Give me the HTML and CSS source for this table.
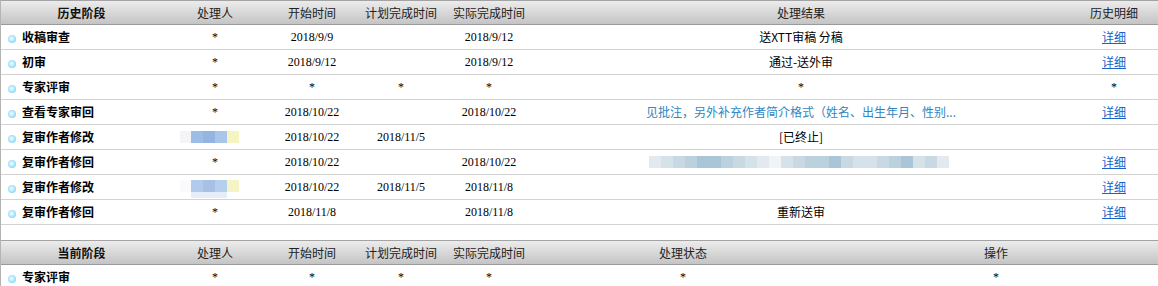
FILE: index.html
```html
<!DOCTYPE html>
<html lang="zh-CN">
<head>
<meta charset="utf-8">
<title>稿件处理历史</title>
<link rel="stylesheet" href="styles.css">
</head>
<body>
<div class="wrap">
  <table class="grid">
    <colgroup><col class="w1"><col class="w2"><col class="w3"><col class="w4"><col class="w5"><col class="w6"><col class="w7"></colgroup>
    <thead>
      <tr><th class="stage">历史阶段</th><th>处理人</th><th>开始时间</th><th>计划完成时间</th><th>实际完成时间</th><th>处理结果</th><th>历史明细</th></tr>
    </thead>
    <tbody>
      <tr><td class="name"><span class="dot"></span>收稿审查</td><td class="num">*</td><td class="num">2018/9/9</td><td></td><td class="num">2018/9/12</td><td>送XTT审稿 分稿</td><td><a href="#">详细</a></td></tr>
      <tr><td class="name"><span class="dot"></span>初审</td><td class="num">*</td><td class="num">2018/9/12</td><td></td><td class="num">2018/9/12</td><td>通过-送外审</td><td><a href="#">详细</a></td></tr>
      <tr><td class="name"><span class="dot"></span>专家评审</td><td class="num">*</td><td class="num">*</td><td class="num">*</td><td class="num">*</td><td class="num">*</td><td class="num">*</td></tr>
      <tr><td class="name"><span class="dot"></span>查看专家审回</td><td class="num">*</td><td class="num">2018/10/22</td><td></td><td class="num">2018/10/22</td><td class="note">见批注，另外补充作者简介格式（姓名、出生年月、性别...</td><td><a href="#">详细</a></td></tr>
      <tr><td class="name"><span class="dot"></span>复审作者修改</td><td class="bl"><div class="blur"><i class="c k0"></i><i class="c b1"></i><i class="c b2"></i><i class="c b3"></i><i class="c y1"></i></div></td><td class="num">2018/10/22</td><td class="num">2018/11/5</td><td></td><td>[已终止]</td><td></td></tr>
      <tr><td class="name"><span class="dot"></span>复审作者修回</td><td class="num">*</td><td class="num">2018/10/22</td><td></td><td class="num">2018/10/22</td><td class="bl"><div class="blur3"><i class="c s1"></i><i class="c s2"></i><i class="c s3"></i><i class="c s4"></i><i class="c s5"></i><i class="c s5"></i><i class="c s4"></i><i class="c s3"></i><i class="c s2"></i><i class="c s1"></i><i class="c s6"></i><i class="c s2"></i><i class="c s3"></i><i class="c s4"></i><i class="c s4"></i><i class="c s5"></i><i class="c s3"></i><i class="c s2"></i><i class="c s2"></i><i class="c s3"></i><i class="c s4"></i><i class="c s5"></i><i class="c s2"></i><i class="c s3"></i><i class="c s1"></i></div></td><td><a href="#">详细</a></td></tr>
      <tr><td class="name"><span class="dot"></span>复审作者修改</td><td class="bl"><div class="blur2"><i class="c k1"></i><i class="c b4"></i><i class="c b5"></i><i class="c b6"></i><i class="c y2"></i><i class="wb"></i><i class="gb"></i><i class="low"></i></div></td><td class="num">2018/10/22</td><td class="num">2018/11/5</td><td class="num">2018/11/8</td><td></td><td><a href="#">详细</a></td></tr>
      <tr><td class="name"><span class="dot"></span>复审作者修回</td><td class="num">*</td><td class="num">2018/11/8</td><td></td><td class="num">2018/11/8</td><td>重新送审</td><td><a href="#">详细</a></td></tr>
    </tbody>
  </table>
  <div class="gap"></div>
  <table class="grid">
    <colgroup><col class="w1"><col class="w2"><col class="w3"><col class="w4"><col class="w5"><col class="v6"><col class="v7"></colgroup>
    <thead>
      <tr><th class="stage">当前阶段</th><th>处理人</th><th>开始时间</th><th>计划完成时间</th><th>实际完成时间</th><th>处理状态</th><th>操作</th></tr>
    </thead>
    <tbody>
      <tr><td class="name"><span class="dot"></span>专家评审</td><td class="num">*</td><td class="num">*</td><td class="num">*</td><td class="num">*</td><td class="num">*</td><td class="num">*</td></tr>
    </tbody>
  </table>
</div>
</body>
</html>
```
FILE: styles.css
```css
html, body {
  margin: 0;
  padding: 0;
  background: #fff;
}
body {
  font-family: "Noto Sans CJK SC", "Microsoft YaHei", sans-serif;
  font-size: 12px;
  color: #000;
}
.wrap {
  width: 1158px;
  border-left: 1px solid #b4b4b4;
  box-sizing: border-box;
}
.grid {
  width: 1157px;
  table-layout: fixed;
  border-collapse: separate;
  border-spacing: 0;
}
.w1 { width: 161px; }
.w2 { width: 106px; }
.w3 { width: 88px; }
.w4 { width: 90px; }
.w5 { width: 86px; }
.w6 { width: 538px; }
.w7 { width: 88px; }
.v6 { width: 302px; }
.v7 { width: 324px; }

.grid th {
  height: 23px;
  padding: 0;
  border-top: 1px solid #a3a3a3;
  border-bottom: 1px solid #9a9a9a;
  background: linear-gradient(#ececec, #c4c4c4);
  font-weight: normal;
  color: #222;
  text-align: center;
  line-height: 23px;
  white-space: nowrap;
}
.grid th.stage {
  font-weight: bold;
  color: #111;
}
.grid td {
  height: 24px;
  padding: 0;
  border-bottom: 1px solid #d3d3d3;
  text-align: center;
  white-space: nowrap;
  line-height: 24px;
  overflow: hidden;
}
.grid td.name {
  text-align: left;
  padding-left: 7px;
  font-weight: bold;
}
.dot {
  display: inline-block;
  width: 8px;
  height: 8px;
  margin-right: 6px;
  border-radius: 50%;
  vertical-align: -1px;
  background: radial-gradient(circle at 45% 45%, #f2fcff 0, #b4e8fb 45%, #56c2ee 100%);
}
.grid td.num {
  font-family: "Liberation Serif", "Times New Roman", serif;
}
.note {
  color: #2f86c2;
}
a {
  color: #1a62c6;
  text-decoration: underline;
}
.gap {
  height: 15px;
}

/* blurred (mosaic) cells */
.grid td.bl {
  vertical-align: top;
  text-align: left;
}
.c {
  display: block;
  width: 12px;
  height: 12px;
  flex: none;
}
.blur {
  display: flex;
  margin: 6px 0 0 18px;
}
.blur3 {
  display: flex;
  justify-content: center;
  margin: 6px 4px 0 0;
}
.blur2 {
  display: grid;
  grid-template-columns: 11px 12px 12px 12px 12px 36px 8px;
  grid-template-rows: 12px 6px;
  margin: 5px 0 0 18px;
  width: max-content;
}
.k0 { width: 11px; background: #f3f3f8; }
.k1 { width: 11px; background: #fafafc; }
.b1 { background: #9dbde6; }
.b2 { background: #94b4e2; }
.b3 { background: #a9c6ea; }
.y1 { background: #f5f5c2; }
.b4 { background: #b2caec; }
.b5 { background: #a8c0e6; }
.b6 { background: #b5cfef; }
.y2 { background: #f4f4c6; }
.wb { display: block; background: #fff; }
.gb { display: block; background: #f3f3f3; }
.low {
  display: block;
  grid-column: 2 / 5;
  grid-row: 2;
  background: #e5edf7;
}
.s1 { background: #e2eaf0; }
.s2 { background: #d6e2ea; }
.s3 { background: #c9d9e3; }
.s4 { background: #bcd1de; }
.s5 { background: #aac5d7; }
.s6 { background: #f0f4f7; }
```
